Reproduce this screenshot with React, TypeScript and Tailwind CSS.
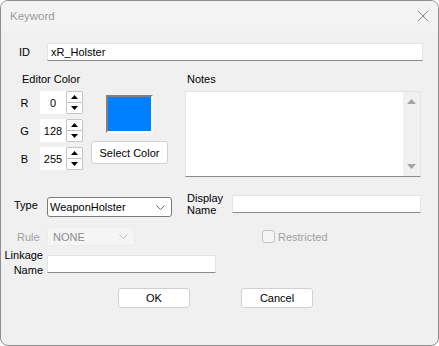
import React from "react"

function Spinner({ label, value }: { label: string; value: string }) {
  return (
    <div className="flex h-[23px] items-center">
      <span className="w-[21px] text-center">{label}</span>
      <div className="ml-[5px] flex h-[23px] w-[26px] items-center justify-center bg-white">{value}</div>
      <div className="flex h-[23px] w-[17px] flex-col">
        <div className="flex h-[12px] items-center justify-center rounded-t-[2px] border border-[#c4c4c4] bg-white">
          <svg width="7" height="4" viewBox="0 0 7 4"><path d="M3.5 0 L7 4 L0 4 Z" fill="#000" /></svg>
        </div>
        <div className="flex h-[11px] items-center justify-center rounded-b-[2px] border border-t-0 border-[#c4c4c4] bg-white">
          <svg width="7" height="4" viewBox="0 0 7 4"><path d="M0 0 L7 0 L3.5 4 Z" fill="#000" /></svg>
        </div>
      </div>
    </div>
  )
}

function Chevron({ color }: { color: string }) {
  return (
    <svg width="9" height="5" viewBox="0 0 9 5" className="mr-[6px]">
      <polyline points="0.5,0.5 4.5,4.5 8.5,0.5" fill="none" stroke={color} strokeWidth="1" />
    </svg>
  )
}

export default function App() {
  return (
    <div className="h-[346px] w-[439px] overflow-hidden rounded-lg border border-[#8e8e8e] bg-[#f0f0f0] text-[11px] leading-[14px] text-black [font-family:'Liberation_Sans',Arial,sans-serif]">
      {/* title bar */}
      <div className="flex h-[30px] items-center justify-between bg-[#f3f3f3] pl-[9px] pr-[8px]">
        <span className="text-[11.5px] text-[#9a9a9a]">Keyword</span>
        <svg width="12" height="12" viewBox="0 0 12 12" className="mr-[1px]">
          <path d="M1 1 L11 11 M11 1 L1 11" stroke="#8a8a8a" strokeWidth="1" />
        </svg>
      </div>

      {/* ID row */}
      <div className="mt-[12px] flex h-[18px] items-center">
        <span className="ml-[18px] w-[28px]">ID</span>
        <div className="flex h-[18px] w-[376px] items-center border border-[#e3e3e3] border-b-[#8a8a8a] bg-white pl-[3px]">xR_Holster</div>
      </div>

      {/* color + notes */}
      <div className="mt-[11px] flex">
        <div className="w-[184px]">
          <div className="ml-[21px] h-[14px]">Editor Color</div>
          <div className="mt-[5px] flex">
            <div className="ml-[13px] flex flex-col gap-[5px]">
              <Spinner label="R" value="0" />
              <Spinner label="G" value="128" />
              <Spinner label="B" value="255" />
            </div>
            <div className="ml-[8px] flex w-[77px] flex-col items-center">
              <div className="mt-[4px] h-[38px] w-[47px] border-2 border-[#808080] border-b-white border-r-white bg-[#0080ff]" />
              <button className="mt-[8px] h-[23px] w-[77px] rounded-[3px] border border-[#d0d0d0] bg-white">Select Color</button>
            </div>
          </div>
        </div>
        <div>
          <div className="ml-[2px] h-[14px]">Notes</div>
          <div className="mt-[5px] flex h-[86px] w-[236px] justify-end border border-[#e3e3e3] border-b-[#8a8a8a] bg-white">
            <div className="flex w-[17px] flex-col items-center justify-between bg-[#f0f0f0] py-[7px]">
              <svg width="9" height="5" viewBox="0 0 9 5"><path d="M4.5 0 L9 5 L0 5 Z" fill="#a3a3a3" /></svg>
              <svg width="9" height="5" viewBox="0 0 9 5"><path d="M0 0 L9 0 L4.5 5 Z" fill="#a3a3a3" /></svg>
            </div>
          </div>
        </div>
      </div>

      {/* type / display name */}
      <div className="mt-[18px] flex h-[22px] items-start">
        <span className="ml-[13px] mt-[3px] w-[33px]">Type</span>
        <div className="mt-[2px] flex h-[20px] w-[125px] items-center justify-between rounded-[3px] border border-[#7a7a7a] bg-white pl-[2px]">
          <span>WeaponHolster</span>
          <Chevron color="#6a6a6a" />
        </div>
        <div className="-mt-[3px] ml-[13px] w-[47px] pl-[2px] leading-[12px]">
          Display<br />Name
        </div>
        <div className="h-[18px] w-[189px] border border-[#e3e3e3] border-b-[#8a8a8a] bg-white" />
      </div>

      {/* rule / restricted */}
      <div className="mt-[10px] flex h-[19px] items-center">
        <span className="ml-[16px] w-[30px] text-[#a0a0a0]">Rule</span>
        <div className="flex h-[19px] w-[88px] items-center justify-between rounded-[3px] border border-[#ececec] bg-[#f5f5f5] pl-[5px] text-[#8a8a8a]">
          <span>NONE</span>
          <Chevron color="#b8b8b8" />
        </div>
        <div className="ml-[127px] h-[13px] w-[13px] rounded-[3px] border border-[#c2c2c2] bg-[#f5f5f5]" />
        <span className="ml-[3px] text-[#a0a0a0]">Restricted</span>
      </div>

      {/* linkage */}
      <div className="mt-[2px] flex items-start">
        <div className="w-[42px] text-right leading-[15px]">
          Linkage<br />Name
        </div>
        <div className="ml-[4px] mt-[7px] h-[18px] w-[169px] border border-[#e3e3e3] border-b-[#8a8a8a] bg-white" />
      </div>

      {/* buttons */}
      <div className="mt-[10px] flex">
        <button className="ml-[117px] h-[20px] w-[72px] rounded-[3px] border border-[#d0d0d0] bg-white">OK</button>
        <button className="ml-[51px] h-[20px] w-[72px] rounded-[3px] border border-[#d0d0d0] bg-white">Cancel</button>
      </div>
    </div>
  )
}
